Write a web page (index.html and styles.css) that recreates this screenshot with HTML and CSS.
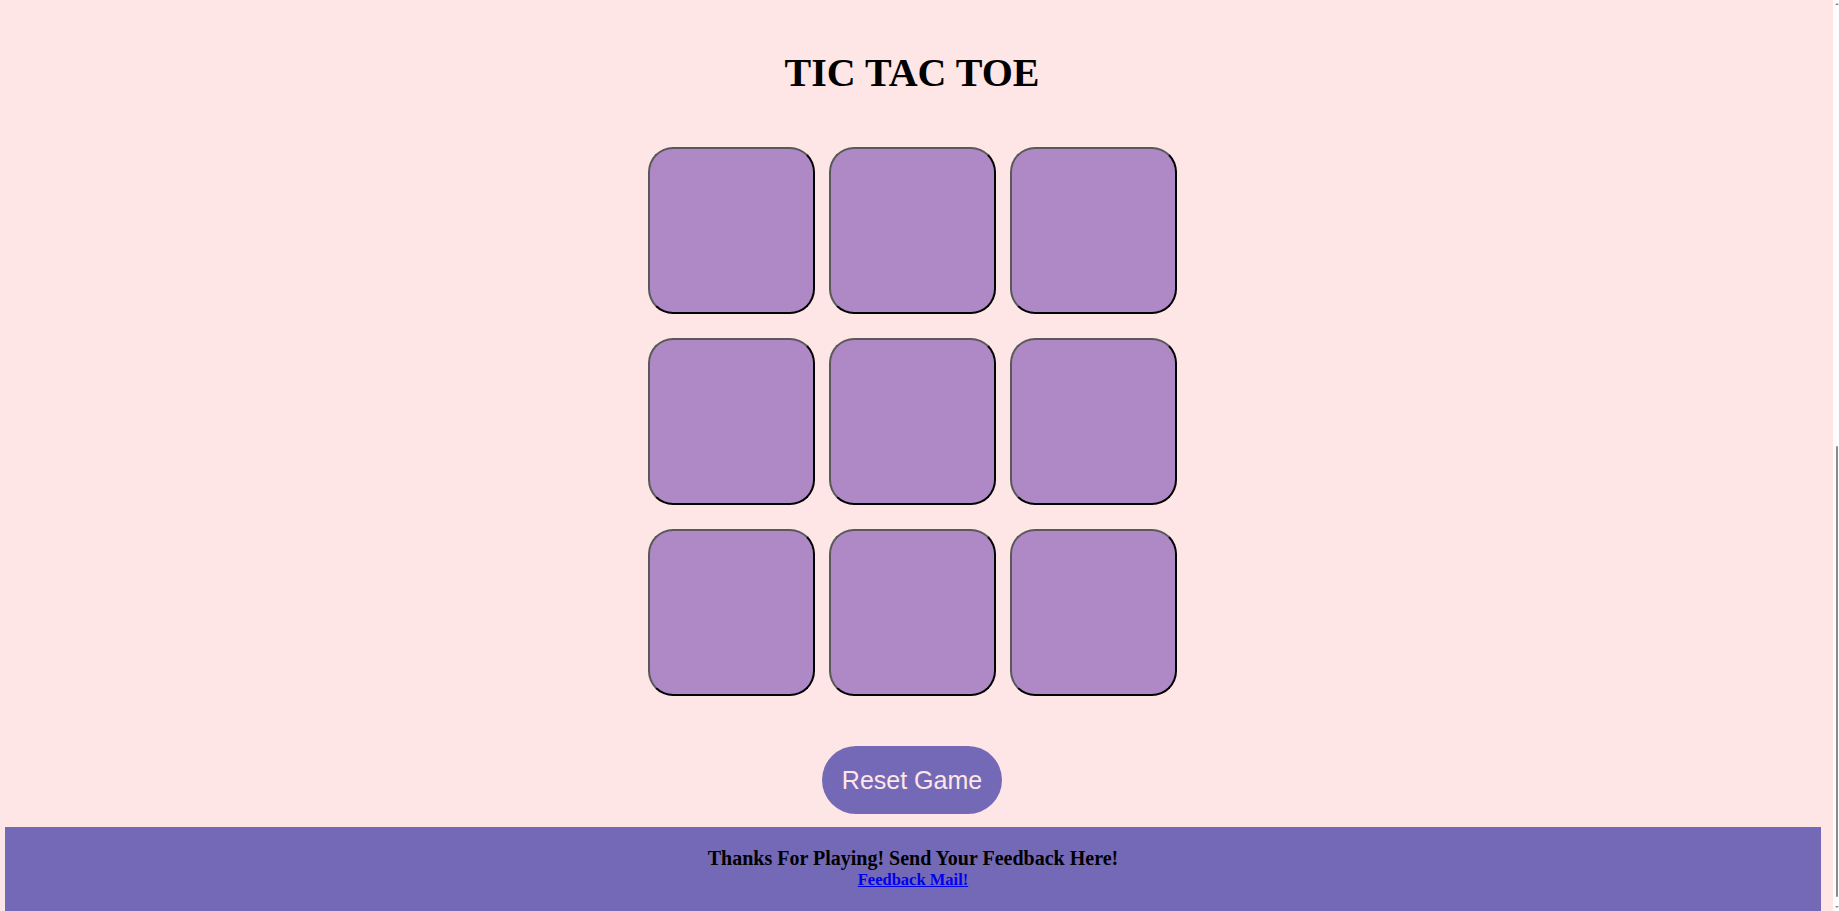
FILE: index.html
```html
<!DOCTYPE html>
<html lang="en">
<head>
<meta charset="utf-8">
<title>Tic Tac Toe</title>
<link rel="stylesheet" href="styles.css">
</head>
<body>
<div class="page">
  <h1 class="title">TIC TAC TOE</h1>
  <div class="board">
    <button class="box"></button>
    <button class="box"></button>
    <button class="box"></button>
    <button class="box"></button>
    <button class="box"></button>
    <button class="box"></button>
    <button class="box"></button>
    <button class="box"></button>
    <button class="box"></button>
  </div>
  <button class="reset">Reset Game</button>
  <footer class="footer">
    <p class="thanks">Thanks For Playing! Send Your Feedback Here!</p>
    <a class="mail" href="#">Feedback Mail!</a>
  </footer>
</div>
<div class="scrollbar">
  <span class="arrow arrow-up"></span>
  <span class="thumb"></span>
  <span class="arrow arrow-down"></span>
</div>
</body>
</html>
```

FILE: styles.css
```css
html, body {
  margin: 0;
  padding: 0;
  height: 100%;
  overflow: hidden;
}

body {
  background: #ffe6e6;
  font-family: "Liberation Serif", "Times New Roman", serif;
}

.page {
  width: calc(100% - 15px);
  display: flex;
  flex-direction: column;
  align-items: center;
}

.title {
  margin: 50px 0 0;
  font-size: 40px;
  line-height: 1.15;
  font-weight: bold;
  color: #000;
}

.board {
  margin-top: 51px;
  display: grid;
  grid-template-columns: repeat(3, 167px);
  grid-auto-rows: 167px;
  column-gap: 14px;
  row-gap: 24px;
}

.box {
  box-sizing: border-box;
  width: 167px;
  height: 167px;
  padding: 0;
  background: #af88c6;
  border: 2px solid;
  border-color: #595959 #000 #000 #595959;
  border-radius: 25px;
}

.reset {
  margin-top: 50px;
  padding: 19px 20px;
  font-family: "Liberation Sans", Arial, sans-serif;
  font-size: 25px;
  line-height: 30px;
  color: #ffe6e6;
  background: #7469b6;
  border: none;
  border-radius: 34px;
}

.footer {
  align-self: stretch;
  margin: 13px 3px 0 5px;
  padding: 20px 0 30px;
  background: #7469b6;
  text-align: center;
}

.thanks {
  margin: 0;
  font-size: 20px;
  line-height: 23px;
  font-weight: bold;
  color: #000;
}

.mail {
  display: inline-block;
  margin-top: 1px;
  font-size: 16.5px;
  line-height: 18.4px;
  font-weight: bold;
  color: #0000ee;
  text-decoration: underline;
}

.scrollbar {
  position: fixed;
  top: 0;
  right: 0;
  width: 6px;
  height: 100%;
  background: #fdfdfd;
}

.thumb {
  position: absolute;
  left: 3px;
  top: 446px;
  width: 2px;
  height: 451px;
  background: #8c8c8c;
  border-radius: 1px;
}

.arrow {
  position: absolute;
  left: 2px;
  width: 0;
  height: 0;
  border-left: 2px solid transparent;
  border-right: 2px solid transparent;
}

.arrow-up {
  top: 3px;
  border-bottom: 2px solid #8c8c8c;
}

.arrow-down {
  bottom: 3px;
  border-top: 2px solid #8c8c8c;
}
```
